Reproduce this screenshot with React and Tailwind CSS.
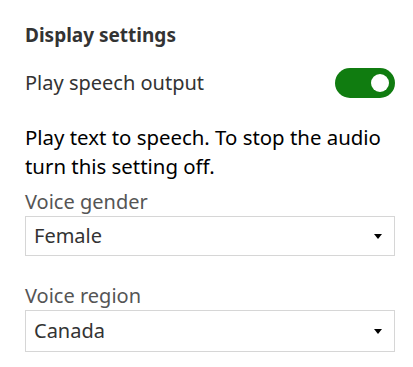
import { useState } from "react";

const Caret = () => (
  <svg width="8" height="5" viewBox="0 0 8 5" className="fill-black">
    <path d="M0 0h8L4 5z" />
  </svg>
);

const SelectBox = ({ label, value, tall }) => (
  <div className="flex flex-col">
    <span className="text-[20px] leading-[28px] text-[#555]">{label}</span>
    <div
      className={`flex items-center justify-between border border-[#d6d6d6] bg-white pl-[8px] pr-[12px] ${
        tall ? "h-[42px]" : "h-[40px]"
      }`}
    >
      <span className="text-[20px] text-[#333]">{value}</span>
      <Caret />
    </div>
  </div>
);

export default function App() {
  const [on, setOn] = useState(true);

  return (
    <div
      className="h-[367px] w-[413px] bg-white pl-[25px] pr-[18px] pt-[22px]"
      style={{ fontFamily: '"Segoe UI", "Noto Sans", sans-serif' }}
    >
      <h2 className="text-[19px] font-bold leading-[26px] text-[#333]">
        Display settings
      </h2>

      <div className="mt-[20px] flex h-[30px] items-center justify-between">
        <span className="text-[20px] text-[#333]">Play speech output</span>
        <button
          type="button"
          onClick={() => setOn(!on)}
          className="flex h-[30px] w-[60px] items-center justify-end rounded-full bg-[#107c10] pr-[6px]"
        >
          <span className="block h-[18px] w-[18px] rounded-full bg-white" />
        </button>
      </div>

      <p className="mt-[25px] text-[20.4px] leading-[29px] text-black">
        Play text to speech. To stop the audio turn this setting off.
      </p>

      <div className="mt-[7px] flex flex-col gap-[26px]">
        <SelectBox label="Voice gender" value="Female" />
        <SelectBox label="Voice region" value="Canada" tall />
      </div>
    </div>
  );
}
